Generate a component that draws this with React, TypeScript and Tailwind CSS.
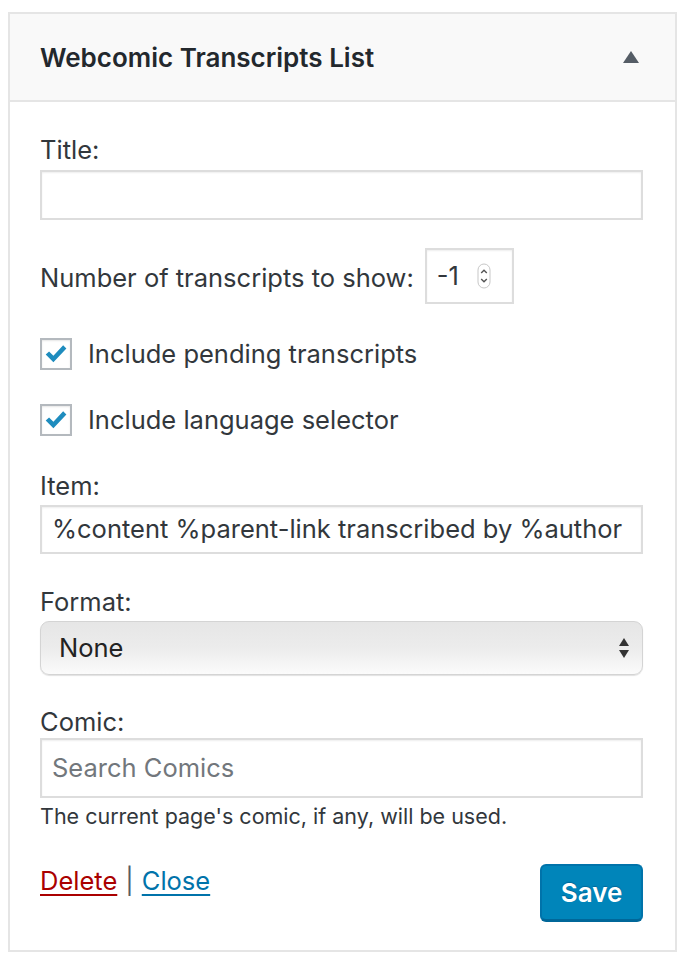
import React from "react";

function Checkbox() {
  return (
    <span className="flex h-[32px] w-[32px] shrink-0 items-center justify-center border-2 border-[#b4b9be] bg-white shadow-[inset_0_1px_2px_rgba(0,0,0,0.1)]">
      <svg width="26" height="26" viewBox="0 0 24 24">
        <path d="M2.5 12.5 L5.6 9.6 L9.6 13.6 L18.6 4 L21.6 6.9 L9.6 19.6 Z" fill="#1e8cbe" />
      </svg>
    </span>
  );
}

function Label({ children }: { children: React.ReactNode }) {
  return <div className="h-[30px] leading-[30px]">{children}</div>;
}

export default function App() {
  return (
    <div
      className="h-[962px] w-[686px] bg-white pl-[8px] pr-[9px] pt-[12px] text-[25.5px] text-[#32373c]"
      style={{ fontFamily: "Inter, 'Noto Sans', sans-serif" }}
    >
      <div className="border-2 border-[#e5e5e5]">
        {/* widget header */}
        <div className="flex h-[88px] items-center justify-between border-b-2 border-[#e5e5e5] bg-[#f9f9f9] pl-[30px] pr-[36px]">
          <h3 className="text-[26px] font-semibold text-[#23282d]">Webcomic Transcripts List</h3>
          <svg width="16" height="12" viewBox="0 0 16 12">
            <path d="M8 0 L16 12 L0 12 Z" fill="#555d66" />
          </svg>
        </div>

        {/* widget body */}
        <div className="pl-[30px] pr-[32px] pt-[33px] pb-[28px]">
          <Label>Title:</Label>
          <div className="mt-[5px] h-[50px] border-2 border-[#ddd] bg-white shadow-[inset_0_1px_2px_rgba(0,0,0,0.07)]" />

          <div className="mt-[28px] flex h-[56px] items-center">
            <span className="pt-[4px]">Number of transcripts to show:</span>
            <div className="ml-[11px] flex h-[56px] w-[89px] items-center border-2 border-[#ddd] bg-white pl-[10px] shadow-[inset_0_1px_2px_rgba(0,0,0,0.07)]">
              <span className="text-[#32373c]">-1</span>
              <svg className="ml-[18px]" width="14" height="26" viewBox="0 0 14 26">
                <rect x="1" y="1" width="12" height="24" rx="6" fill="#fff" stroke="#c7c7c7" />
                <path d="M4.2 10 L7 7.2 L9.8 10" fill="none" stroke="#555" strokeWidth="1.4" />
                <path d="M4.2 16 L7 18.8 L9.8 16" fill="none" stroke="#555" strokeWidth="1.4" />
              </svg>
            </div>
          </div>

          <label className="mt-[34px] flex h-[32px] items-center gap-[16px]">
            <Checkbox />
            <span>Include pending transcripts</span>
          </label>
          <label className="mt-[34px] flex h-[32px] items-center gap-[16px]">
            <Checkbox />
            <span>Include language selector</span>
          </label>

          <div className="mt-[35px]">
            <Label>Item:</Label>
          </div>
          <div className="mt-[4px] flex h-[49px] items-center overflow-hidden whitespace-nowrap border-2 border-[#ddd] bg-white pl-[10px] shadow-[inset_0_1px_2px_rgba(0,0,0,0.07)]">
            %content %parent-link transcribed by %author
          </div>

          <div className="mt-[33px]">
            <Label>Format:</Label>
          </div>
          <div className="mt-[4px] flex h-[54px] items-center justify-between rounded-[9px] border border-[#d4d4d4] bg-gradient-to-b from-[#e6e6e6] via-[#ececec] to-[#fbfbfb] pl-[18px] pr-[12px] text-[#222] shadow-[0_1px_1px_rgba(0,0,0,0.12)]">
            <span>None</span>
            <svg width="12" height="24" viewBox="0 0 12 24">
              <path d="M6 2 L11 10 L1 10 Z" fill="#333" />
              <path d="M1 14 L11 14 L6 22 Z" fill="#333" />
            </svg>
          </div>

          <div className="mt-[32px]">
            <Label>Comic:</Label>
          </div>
          <div className="mt-[1px] flex h-[60px] items-center border-2 border-[#ddd] bg-white pl-[10px] text-[#72777c] shadow-[inset_0_1px_2px_rgba(0,0,0,0.07)]">
            Search Comics
          </div>
          <p className="mt-[6px] text-[21.5px] leading-[24px] text-[#32373c]">The current page's comic, if any, will be used.</p>

          <div className="mt-[36px] flex items-start justify-between">
            <div className="mt-[2px] leading-[30px]">
              <a className="text-[#a00] underline underline-offset-[4px]" href="#">Delete</a>
              <span className="mx-[8px] text-[#555d66]">|</span>
              <a className="text-[#0073aa] underline underline-offset-[4px]" href="#">Close</a>
            </div>
            <button className="h-[58px] w-[103px] rounded-[6px] border-2 border-b-[3px] border-[#0073aa] border-b-[#006799] bg-[#0085ba] text-[26px] font-semibold text-white [text-shadow:0_-1px_1px_#006799]">
              Save
            </button>
          </div>
        </div>
      </div>
    </div>
  );
}
